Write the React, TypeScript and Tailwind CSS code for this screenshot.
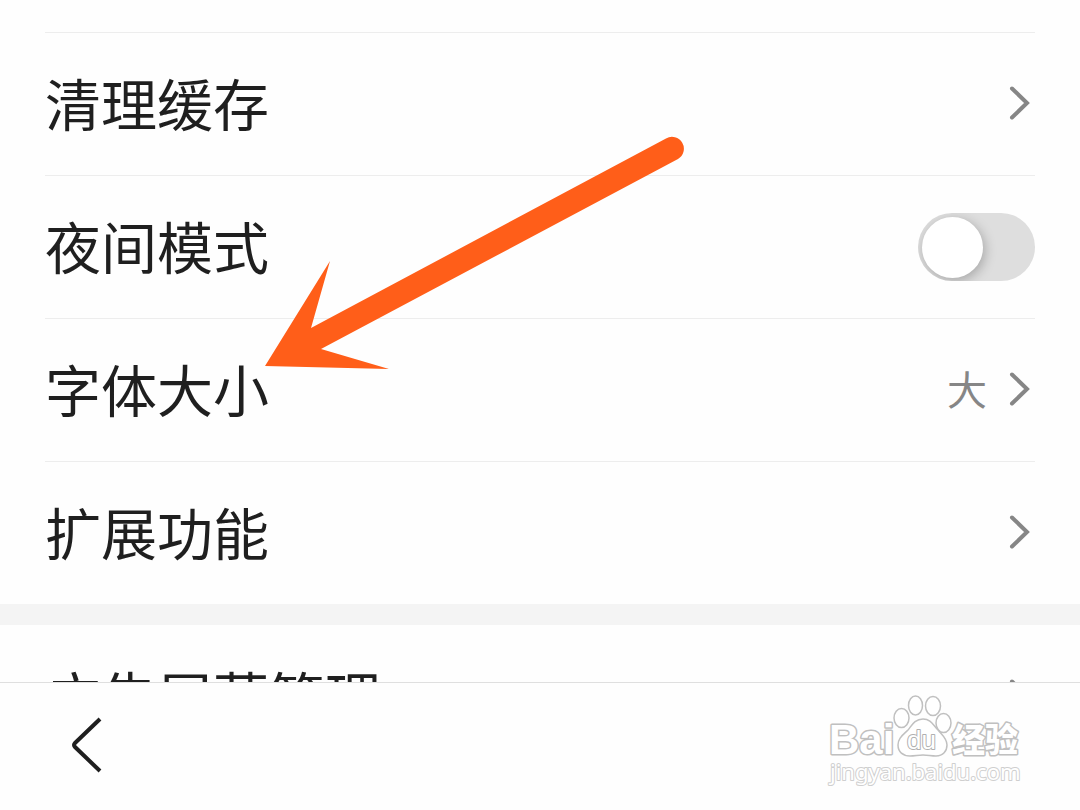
import type { ReactNode } from "react";

type SettingItem = {
  title: string;
  value?: string;
};

const ROW = "flex w-full h-[143px] items-center justify-between border-t text-left";

function Chevron() {
  return (
    <svg viewBox="0 0 28 36" className="w-7 h-9 shrink-0" fill="none" stroke="#868686" strokeWidth="4" strokeLinecap="round" aria-hidden="true">
      <path d="M5 2.500 20 17 5 31.500" />
    </svg>
  );
}

function Title({ children }: { children: ReactNode }) {
  return <span className="pb-1 text-[56px] leading-[80px] text-[#1f1f1f]">{children}</span>;
}

function LinkRow({ title, value, plain }: SettingItem & { plain?: boolean }) {
  return (
    <button type="button" className={plain ? `${ROW} border-transparent` : `${ROW} border-[#ededed]`}>
      <Title>{title}</Title>
      <span className="flex items-center gap-5">
        {value && <span className="pb-1 text-[40px] leading-[56px] text-[#868686]">{value}</span>}
        <Chevron />
      </span>
    </button>
  );
}

function SwitchRow({ title }: SettingItem) {
  return (
    <label className={`${ROW} border-[#ededed]`}>
      <Title>{title}</Title>
      <input
        type="checkbox"
        role="switch"
        className="flex h-[68px] w-[117px] shrink-0 appearance-none items-center overflow-hidden rounded-full bg-[#dedede] px-1 before:size-[61px] before:rounded-full before:bg-white before:shadow-[2px_3px_12px_rgba(0,0,0,0.25)] before:content-[''] checked:justify-end checked:bg-green-500"
      />
    </label>
  );
}

function Pointer() {
  return (
    <svg viewBox="0 0 420 234" className="pointer-events-none absolute left-[265px] top-[136px] w-[420px] h-[234px]" fill="#ff5e19" aria-hidden="true">
      <path d="M0 230 65 125 46 192 401 2.500A11.500 11.500 0 0 1 413 23L56 213 124 233Z" />
    </svg>
  );
}

function Watermark() {
  return (
    <svg viewBox="0 0 200 104" className="w-[200px] h-[104px]" fill="#fff" stroke="#c0c0c0" strokeWidth="1.500" role="img" aria-label="Baidu">
      <text x="3" y="59" fontFamily="'Liberation Sans', sans-serif" fontWeight="700" fontSize="42" paintOrder="stroke" strokeWidth="3" strokeLinejoin="round">Bai</text>
      <ellipse cx="75.500" cy="23" rx="7.500" ry="9.500" />
      <ellipse cx="89.500" cy="10.500" rx="7" ry="9.500" />
      <ellipse cx="107" cy="11" rx="7.500" ry="9.500" />
      <ellipse cx="117.500" cy="28" rx="7.500" ry="9.500" />
      <path d="M97 24C89 24 86 30 82 35 77 40 72 43 72 50c0 7 5 11 12 11 5 0 8-1 13-1s8 1 13 1c7 0 11-5 11-11 0-7-5-10-9-15-5-5-7-11-15-11Z" />
      <text x="81" y="54" fontFamily="'Liberation Sans', sans-serif" fontSize="26" stroke="#b0b0b0" strokeWidth="2" strokeLinejoin="round" paintOrder="stroke">du</text>
      <text x="126" y="57" fontFamily="'Noto Sans CJK SC', sans-serif" fontWeight="900" fontSize="33" strokeWidth="3" strokeLinejoin="round" paintOrder="stroke">经验</text>
      <text x="4" y="85" fontFamily="'Noto Sans', sans-serif" fontSize="22" stroke="#cfcfcf" strokeWidth="2" strokeLinejoin="round" paintOrder="stroke">jingyan.baidu.com</text>
    </svg>
  );
}

export default function App() {
  return (
    <div className="relative flex h-screen flex-col overflow-hidden bg-[#fefefe] font-['Noto_Sans_CJK_SC',sans-serif]">
      <main className="min-h-0 flex-1 overflow-hidden">
        <section className="px-[45px] pt-8">
          <LinkRow title="清理缓存" />
          <SwitchRow title="夜间模式" />
          <LinkRow title="字体大小" value="大" />
          <LinkRow title="扩展功能" />
        </section>
        <div className="h-[21px] bg-[#f4f4f4]" />
        <section className="px-[45px]">
          <LinkRow title="广告屏蔽管理" plain />
        </section>
      </main>

      <nav className="flex h-32 shrink-0 items-center justify-between border-t border-[#dfdfdf] pl-[66px] pr-[54px]">
        <button type="button" aria-label="返回">
          <svg viewBox="0 0 40 60" className="w-10 h-[60px]" fill="none" stroke="#1f1f1f" strokeWidth="4" strokeLinejoin="round" aria-hidden="true">
            <path d="M34 2 9 26Q7 28 9 30L34 54" />
          </svg>
        </button>
        <Watermark />
      </nav>

      <Pointer />
    </div>
  );
}
